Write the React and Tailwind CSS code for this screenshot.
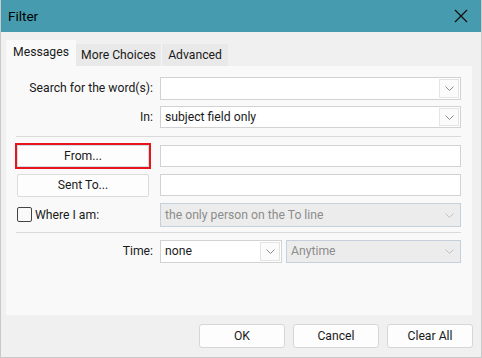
import React from 'react';

const FONT = { fontFamily: 'Roboto, "Noto Sans", sans-serif' };

function Chevron({ color = '#7a7a7a' }) {
  return (
    <svg width="9" height="5" viewBox="0 0 9 5" fill="none">
      <path d="M0.5 0.5 L4.5 4.5 L8.5 0.5" stroke={color} strokeWidth="1" />
    </svg>
  );
}

function Combo({ value, disabled, className = '' }) {
  return (
    <div
      className={`flex h-full items-stretch border ${
        disabled ? 'border-[#c4d0dc] bg-[#ececec] text-[#8d8d8d]' : 'border-[#d2d2d2] bg-white text-[#1a1a1a]'
      } ${className}`}
    >
      <div className="flex flex-1 items-center truncate pl-[4px]">{value}</div>
      <div
        className={`m-px flex w-[20px] items-center justify-center border ${
          disabled ? 'border-transparent' : 'border-[#e4e4e4] bg-[#fbfbfb]'
        }`}
      >
        <Chevron color={disabled ? '#c0c0c0' : '#8a8a8a'} />
      </div>
    </div>
  );
}

function TextBox() {
  return <div className="h-full flex-1 border border-[#d2d2d2] bg-white" />;
}

function Label({ children }) {
  return <div className="w-[139px] shrink-0 pr-[1px] text-right">{children}</div>;
}

export default function App() {
  return (
    <div
      className="flex h-[358px] w-[482px] flex-col border-b border-l border-r border-[#c9c9c9] bg-[#f0f0f0] text-[12.2px] text-[#1a1a1a]"
      style={FONT}
    >
      {/* title bar */}
      <div className="flex h-[32px] shrink-0 items-center justify-between bg-[#469cae] pl-[7px] pr-[13px]">
        <span className="text-[13.5px] text-black">Filter</span>
        <svg width="14" height="14" viewBox="0 0 14 14">
          <path d="M1 1 L13 13 M13 1 L1 13" stroke="#111" strokeWidth="1.3" />
        </svg>
      </div>

      {/* tabs */}
      <div className="mt-[8px] flex h-[26px] items-end pl-[5px]">
        <div className="flex h-[26px] w-[70px] items-center justify-center bg-[#f9f9f9] pb-[2px]">Messages</div>
        <div className="flex h-[22px] w-[86px] items-center justify-center border-r border-[#f6f6f6] bg-[#e9e9e9]">
          More Choices
        </div>
        <div className="flex h-[22px] w-[66px] items-center justify-center bg-[#e9e9e9]">Advanced</div>
      </div>

      {/* panel */}
      <div className="ml-[5px] h-[249px] w-[466px] bg-[#f9f9f9] pl-[9px] pr-[11px] pt-[11px]">
        <div className="flex h-[23px] items-center gap-[6px]">
          <Label>Search for the word(s):</Label>
          <Combo value="" className="flex-1" />
        </div>
        <div className="mt-[6px] flex h-[22px] items-center gap-[6px]">
          <Label>In:</Label>
          <Combo value="subject field only" className="flex-1" />
        </div>
        <div className="ml-px mt-[8px] h-px bg-[#dadada]" />

        <div className="mt-[8px] flex h-[22px] items-center gap-[6px]">
          <div className="w-[139px] shrink-0 pl-[2px]">
            <button className="flex h-[22px] w-[132px] items-center justify-center border border-[#d3dbe3] bg-[#fdfdfd] outline-2 outline-[#e8141b]">
              From...
            </button>
          </div>
          <TextBox />
        </div>
        <div className="mt-[7px] flex h-[22px] items-center gap-[6px]">
          <div className="w-[139px] shrink-0 pl-[2px]">
            <button className="flex h-[23px] w-[132px] items-center justify-center rounded-[2px] border border-[#dcdcdc] bg-[#fdfdfd]">
              Sent To...
            </button>
          </div>
          <TextBox />
        </div>
        <div className="mt-[7px] flex h-[24px] items-center gap-[6px]">
          <div className="flex w-[139px] shrink-0 items-center gap-[3px] pl-[2px]">
            <div className="h-[15px] w-[15px] rounded-[2px] border border-[#444] bg-[#f9f9f9]" />
            <span>Where I am:</span>
          </div>
          <Combo value="the only person on the To line" disabled className="flex-1" />
        </div>
        <div className="ml-px mt-[5px] h-px bg-[#dadada]" />

        <div className="mt-[7px] flex h-[23px] items-center gap-[6px]">
          <Label>Time:</Label>
          <Combo value="none" className="w-[122px]" />
          <Combo value="Anytime" disabled className="ml-[-2px] flex-1" />
        </div>
      </div>

      {/* footer buttons */}
      <div className="mt-[9px] flex justify-end gap-[8px] pr-[8px]">
        <button className="flex h-[24px] w-[86px] items-center justify-center rounded-[3px] border border-[#d6d6d6] bg-[#fdfdfd]">
          OK
        </button>
        <button className="flex h-[24px] w-[86px] items-center justify-center rounded-[3px] border border-[#d6d6d6] bg-[#fdfdfd]">
          Cancel
        </button>
        <button className="flex h-[24px] w-[86px] items-center justify-center rounded-[3px] border border-[#d6d6d6] bg-[#fdfdfd]">
          Clear All
        </button>
      </div>
    </div>
  );
}
